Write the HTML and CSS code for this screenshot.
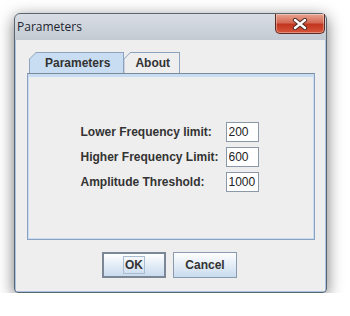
FILE: index.html
```html
<!DOCTYPE html>
<html lang="en">
<head>
    <meta charset="UTF-8">
    <title>Parameters</title>
    <link rel="stylesheet" href="styles.css">
</head>
<body>
    <div class="window">
        <div class="titlebar">
            <span class="title">Parameters</span>
            <button class="close" type="button">
                <svg width="16" height="12" viewBox="0 0 16 12">
                    <path d="M3 2 L13 10 M13 2 L3 10" stroke="#4a2a24" stroke-width="4.2" stroke-linecap="round"/>
                    <path d="M3 2 L13 10 M13 2 L3 10" stroke="#fff" stroke-width="2.4" stroke-linecap="round"/>
                </svg>
            </button>
        </div>
        <div class="client">
            <div class="tabpane">
                <div class="tabs">
                    <div class="tab selected"><div class="face">Parameters</div></div>
                    <div class="tab"><div class="face">About</div></div>
                </div>
                <div class="panel">
                    <div class="form">
                        <label>Lower Frequency limit:</label>
                        <input type="text" value="200">
                        <label>Higher Frequency Limit:</label>
                        <input type="text" value="600">
                        <label>Amplitude Threshold:</label>
                        <input type="text" value="1000">
                    </div>
                </div>
            </div>
            <div class="btns">
                <button class="btn focused" type="button"><span>OK</span></button>
                <button class="btn" type="button"><span>Cancel</span></button>
            </div>
        </div>
    </div>
</body>
</html>
```

FILE: styles.css
```css
* {
    box-sizing: border-box;
}
body {
    margin: 0;
    padding: 13px 0 0 14px;
    background-color: #fff;
    font-family: "Liberation Sans", Arial, sans-serif;
}
.window {
    width: 313px;
    height: 280px;
    border: 1px solid #5b6570;
    border-radius: 6px 6px 4px 4px;
    padding: 0 1px 1px 1px;
    display: flex;
    flex-direction: column;
    background: linear-gradient(#d9dee4, #c3cad3 26px, #a9c3e2 27px, #a9c3e2);
    box-shadow: 0 4px 16px rgba(0, 0, 0, 0.55);
}
.titlebar {
    height: 26px;
    display: flex;
    justify-content: space-between;
    align-items: flex-start;
}
.title {
    font-family: "Open Sans", "Noto Sans", sans-serif;
    font-size: 12px;
    color: #1e2530;
    padding: 4px 0 0 1px;
}
.close {
    width: 50px;
    height: 20px;
    border: 1px solid #5d2a22;
    border-top: none;
    border-radius: 0 0 5px 5px;
    background: linear-gradient(#e8a492, #d46a55 45%, #c2361f 55%, #d6563c);
    display: flex;
    justify-content: center;
    align-items: center;
    padding: 0;
    box-shadow: inset 0 0 0 1px rgba(255, 255, 255, 0.35);
}
.client {
    flex: 1;
    background-color: #eeeeee;
    display: flex;
    flex-direction: column;
}
.tabpane {
    margin: 12px 10px 0 11px;
}
.tabs {
    display: flex;
    padding-left: 2px;
}
.tab {
    height: 21px;
    padding: 1px 1px 0 1px;
    background-color: #8da3bd;
    clip-path: polygon(7px 0, 100% 0, 100% 100%, 0 100%, 0 7px);
    margin-right: -1px;
}
.face {
    height: 100%;
    padding: 0 9px 0 11px;
    background-color: #eeeeee;
    clip-path: polygon(6px 0, 100% 0, 100% 100%, 0 100%, 0 6px);
    font-size: 12px;
    font-weight: bold;
    color: #333;
    display: flex;
    align-items: center;
}
.tab.selected .face {
    padding: 0 13px 0 15px;
    background-color: #c8ddf2;
}
.panel {
    height: 167px;
    border: 1px solid #8aa2c0;
    border-top-color: #7a8a99;
    box-shadow: inset 0 0 0 1px #c8ddf2, inset 0 2px 0 1px #c8ddf2;
    display: flex;
    justify-content: center;
    align-items: center;
}
.form {
    display: grid;
    grid-template-columns: auto 33px;
    column-gap: 7px;
    row-gap: 5px;
    align-items: center;
    margin-left: -3px;
}
label {
    font-size: 12px;
    font-weight: bold;
    color: #333;
}
input {
    width: 33px;
    height: 20px;
    border: 1px solid #8a98a8;
    padding: 0 2px;
    font-family: "Liberation Sans", Arial, sans-serif;
    font-size: 12px;
    color: #222;
    background-color: #fff;
}
.btns {
    flex: 1;
    display: flex;
    justify-content: center;
    align-items: center;
    gap: 7px;
    padding-bottom: 1px;
    margin-left: -2px;
}
.btn {
    width: 64px;
    height: 26px;
    border: 1px solid #8a9bb0;
    background: linear-gradient(#ffffff, #e6eef7 45%, #c9dbee);
    font-family: "Liberation Sans", Arial, sans-serif;
    font-size: 12px;
    font-weight: bold;
    color: #333;
    padding: 0;
    display: flex;
    justify-content: center;
    align-items: center;
}
.btn.focused {
    border: 2px solid #7b8797;
}
.btn.focused span {
    border: 1px solid #a9bcd2;
    padding: 1px 1px;
    line-height: 14px;
}
```
